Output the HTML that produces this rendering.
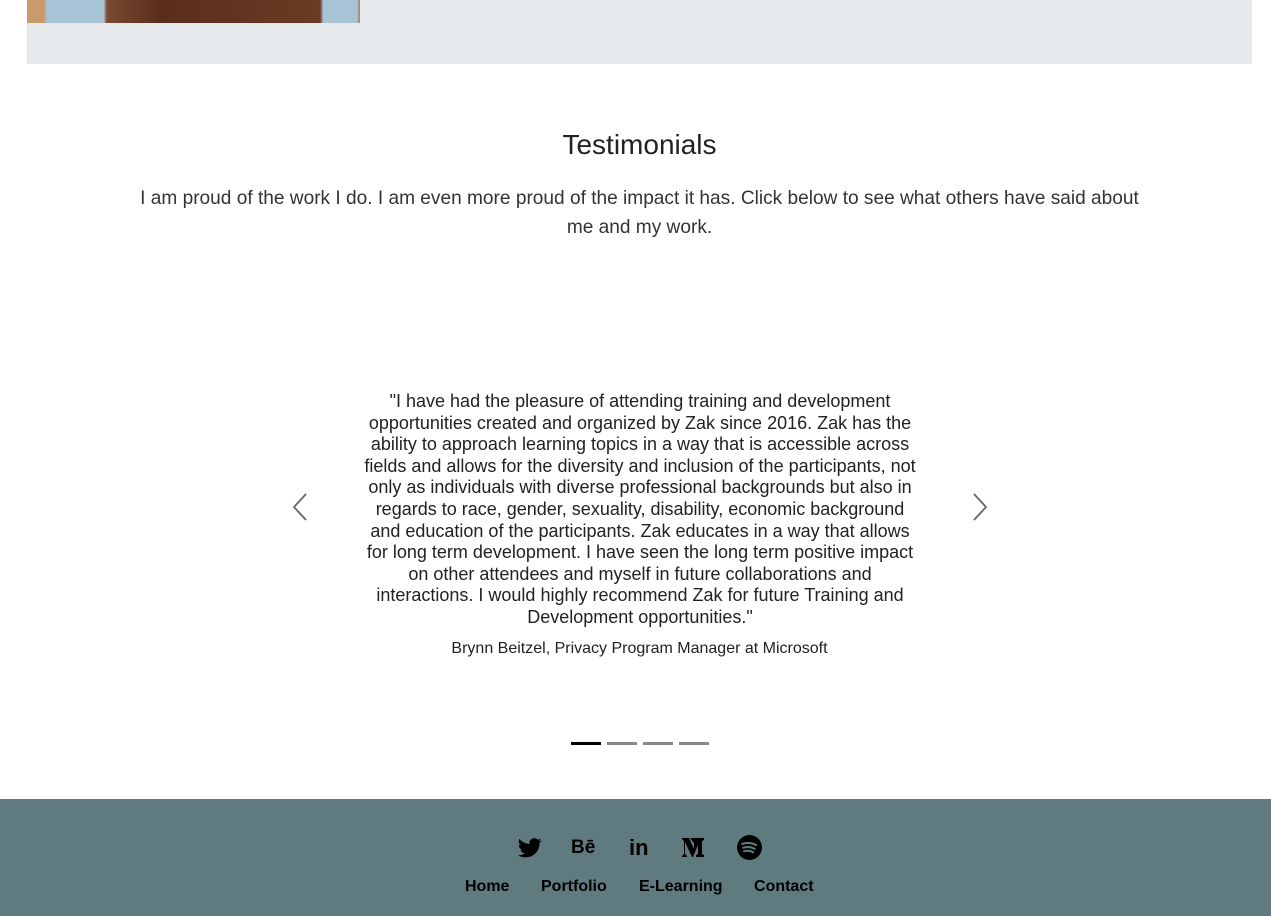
<!DOCTYPE html>
<html><head><style>
body{margin:0;width:1271px;height:916px;overflow:hidden;background:#fff;font-family:"Liberation Sans",sans-serif;color:#222;position:relative}
.abs{position:absolute}
</style></head><body>
<div class="abs" style="left:27px;top:0;width:1225px;height:64px;background:#e6e9ec"></div>
<div class="abs" style="left:27px;top:0;width:333px;height:23px;background:linear-gradient(90deg,#c99a6a 0,#c99a6a 5%,#a9c3d6 6%,#a9c3d6 23%,#7a4a30 24%,#5a2e1c 40%,#6b3a22 88%,#a9c3d6 89%,#a9c3d6 99%,#c07a40 100%)"></div>
<div class="abs" style="left:0;width:1279px;top:129px;text-align:center;font-size:28px;color:#222">Testimonials</div>
<div class="abs" style="left:133px;width:1013px;top:184px;text-align:center;font-size:19.1px;line-height:29px;color:#333">I am proud of the work I do. I am even more proud of the impact it has. Click below to see what others have said about me and my work.</div>
<div class="abs" style="left:360px;width:560px;top:391px;text-align:center;font-size:18px;line-height:21.6px;color:#222">"I have had the pleasure of attending training and development opportunities created and organized by Zak since 2016. Zak has the ability to approach learning topics in a way that is accessible across fields and allows for the diversity and inclusion of the participants, not only as individuals with diverse professional backgrounds but also in regards to race, gender, sexuality, disability, economic background and education of the participants. Zak educates in a way that allows for long term development. I have seen the long term positive impact on other attendees and myself in future collaborations and interactions. I would highly recommend Zak for future Training and Development opportunities."</div>
<div class="abs" style="left:0;width:1279px;top:640px;text-align:center;font-size:16px;color:#222">Brynn Beitzel, Privacy Program Manager at Microsoft</div>
<svg class="abs" style="left:290px;top:492px" width="20" height="30"><path d="M16 2 L4 15 L16 28" fill="none" stroke="#666" stroke-width="1.8"/></svg>
<svg class="abs" style="left:970px;top:492px" width="20" height="30"><path d="M4 2 L16 15 L4 28" fill="none" stroke="#666" stroke-width="1.8"/></svg>
<div class="abs" style="left:571px;top:742px;width:30px;height:3px;background:#000"></div>
<div class="abs" style="left:607px;top:742px;width:30px;height:3px;background:#888"></div>
<div class="abs" style="left:643px;top:742px;width:30px;height:3px;background:#888"></div>
<div class="abs" style="left:679px;top:742px;width:30px;height:3px;background:#888"></div>
<div class="abs" style="left:0;top:799px;width:1271px;height:117px;background:#5f7b80"></div>
<svg class="abs" style="left:518px;top:837px" width="24" height="22" viewBox="0 0 24 20"><path fill="#000" d="M23.6 2.4c-.9.4-1.8.6-2.8.8 1-.6 1.8-1.6 2.1-2.7-.9.6-2 1-3.1 1.2A4.9 4.9 0 0 0 11.5 6 13.9 13.9 0 0 1 1.4.9a4.9 4.9 0 0 0 1.5 6.6c-.8 0-1.6-.2-2.2-.6 0 2.4 1.7 4.4 3.9 4.8-.7.2-1.5.2-2.2.1a4.9 4.9 0 0 0 4.6 3.4A9.9 9.9 0 0 1 0 17.2 14 14 0 0 0 7.5 19.4c9.1 0 14-7.5 14-14v-.6c1-.7 1.8-1.5 2.4-2.4z"/></svg>
<div class="abs" style="left:571px;top:837px;font-size:19px;font-weight:bold;color:#000">Bē</div>
<div class="abs" style="left:629px;top:835px;font-size:22px;font-weight:bold;color:#000">in</div>
<svg class="abs" style="left:682px;top:837px" width="24" height="21" viewBox="0 0 24 21"><path fill="#000" d="M0 1h7l5 11V6l-4-5h0 14v2l-2 1v13l2 1v2H14v-2l2-1V8l-5 12h-1L3 5v12l2 2v1H0v-1l2-2V4L0 2z"/></svg>
<svg class="abs" style="left:737px;top:835px" width="25" height="25" viewBox="0 0 24 24"><circle cx="12" cy="12" r="12" fill="#000"/><path d="M5 8.5c4.5-1.4 9.5-1 13.5 1.2M6 12.2c3.8-1.1 7.8-.7 11 1.1M6.8 15.6c3-.8 6.2-.5 8.8 1" stroke="#5f7b80" stroke-width="2" fill="none" stroke-linecap="round"/></svg>
<div class="abs" style="left:465px;top:878px;font-size:16px;font-weight:bold;color:#000">Home</div>
<div class="abs" style="left:541px;top:878px;font-size:16px;font-weight:bold;color:#000">Portfolio</div>
<div class="abs" style="left:639px;top:878px;font-size:16px;font-weight:bold;color:#000">E-Learning</div>
<div class="abs" style="left:754px;top:878px;font-size:16px;font-weight:bold;color:#000">Contact</div>
</body></html>
